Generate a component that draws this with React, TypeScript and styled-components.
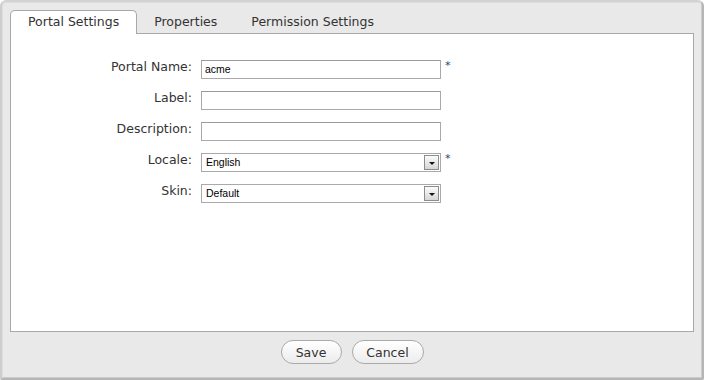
import React from 'react'
import styled, { createGlobalStyle } from 'styled-components'

const Global = createGlobalStyle`
body{
	margin:0;
	background:#ffffff;
	font-family:"DejaVu Sans", Verdana, sans-serif;
}
`

const Frame = styled.div`
width:704px;
height:380px;
box-sizing:border-box;
display:flex;
flex-direction:column;
padding:8px 8px 0 8px;
background:#e9e9e9;
border-style:solid;
border-width:2px;
border-color:#d2d2d2 #b6b6b6 #b6b6b6 #cdcdcd;
border-radius:6px 6px 2px 2px;
box-shadow:inset 1px 1px 0 #dedede, inset -1px -1px 0 #cbcbcb;
`

const TabBar = styled.div`
display:flex;
height:23px;
position:relative;
z-index:1;
`

const Tab = styled.div<{ $active?: boolean }>`
box-sizing:border-box;
height:${p => (p.$active ? '24px' : '23px')};
padding:0 ${p => (p.$active ? '17px 0 17px' : '16px')};
line-height:22px;
font-size:12.5px;
color:#333;
border:1px solid ${p => (p.$active ? '#a8a8a8' : 'transparent')};
border-bottom:none;
border-radius:5px 5px 0 0;
background:${p => (p.$active ? '#ffffff' : 'transparent')};
white-space:nowrap;
`

const Panel = styled.div`
flex:1;
background:#fff;
border:1px solid #a8a8a8;
padding-top:26px;
`

const Form = styled.div`
display:grid;
grid-template-columns:186px 240px 20px;
column-gap:4px;
row-gap:12px;
`

const Label = styled.label`
text-align:right;
padding-right:5px;
font-size:12.5px;
color:#333;
line-height:14px;
white-space:nowrap;
`

const Input = styled.div`
box-sizing:border-box;
height:19px;
border:1px solid #a9a9a9;
border-top-color:#9a9a9a;
background:#fff;
padding-left:3px;
font-family:"Liberation Sans", Arial, sans-serif;
font-size:10.5px;
line-height:17px;
color:#000;
`

const SelectBox = styled.div`
box-sizing:border-box;
height:19px;
display:flex;
align-items:center;
border:1px solid #a9a9a9;
background:#fff;
padding:0 1px 0 4px;
font-family:"Liberation Sans", Arial, sans-serif;
font-size:10.5px;
color:#000;
`

const SelectValue = styled.span`
flex:1;
line-height:17px;
`

const ArrowButton = styled.span`
box-sizing:border-box;
width:15px;
height:15px;
display:flex;
align-items:center;
justify-content:center;
border:1px solid #8c8c8c;
background:linear-gradient(#fbfbfb, #d6d6d6);
`

const Arrow = styled.span`
width:0;
height:0;
border-left:3px solid transparent;
border-right:3px solid transparent;
border-top:3px solid #111;
margin-top:1px;
`

const Required = styled.span`
font-size:11px;
line-height:8px;
color:#2c3c80;
padding-top:2px;
`

const Footer = styled.div`
display:flex;
justify-content:center;
gap:10px;
padding-top:8px;
height:46px;
box-sizing:border-box;
`

const Button = styled.button<{ $w: number }>`
box-sizing:border-box;
width:${p => p.$w}px;
height:24px;
padding:0;
border:1px solid #a9a9a9;
border-radius:12px;
background:linear-gradient(#ffffff, #ececec);
font-family:"DejaVu Sans", Verdana, sans-serif;
font-size:12.5px;
color:#333;
`

type Field = { label: string, value?: string, select?: boolean, required?: boolean }

const fields: Field[] = [
	{ label: 'Portal Name:', value: 'acme', required: true },
	{ label: 'Label:' },
	{ label: 'Description:' },
	{ label: 'Locale:', value: 'English', select: true, required: true },
	{ label: 'Skin:', value: 'Default', select: true },
]

export default function App() {
	return (
		<>
			<Global />
			<Frame>
				<TabBar>
					<Tab $active>Portal Settings</Tab>
					<Tab>Properties</Tab>
					<Tab>Permission Settings</Tab>
				</TabBar>
				<Panel>
					<Form>
						{fields.map(f => (
							<React.Fragment key={f.label}>
								<Label>{f.label}</Label>
								{f.select ? (
									<SelectBox>
										<SelectValue>{f.value}</SelectValue>
										<ArrowButton><Arrow /></ArrowButton>
									</SelectBox>
								) : (
									<Input>{f.value}</Input>
								)}
								<Required>{f.required ? '*' : ''}</Required>
							</React.Fragment>
						))}
					</Form>
				</Panel>
				<Footer>
					<Button $w={61}>Save</Button>
					<Button $w={72}>Cancel</Button>
				</Footer>
			</Frame>
		</>
	)
}
